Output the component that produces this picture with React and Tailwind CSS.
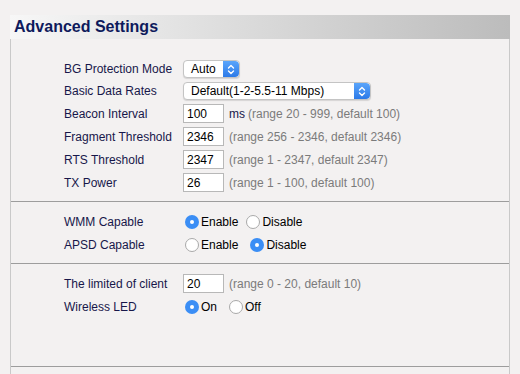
import React from "react";

function Stepper() {
  return (
    <span className="flex h-full w-[16px] items-center justify-center rounded-r-[4px] bg-gradient-to-b from-[#5aa5fb] to-[#2c7ae8]">
      <svg width="8" height="11" viewBox="0 0 8 11" fill="none" stroke="#ffffff" strokeWidth="1.4" strokeLinecap="round" strokeLinejoin="round">
        <path d="M1.5 4 L4 1.5 L6.5 4" />
        <path d="M1.5 7 L4 9.5 L6.5 7" />
      </svg>
    </span>
  );
}

function Select({ value, width, height }) {
  return (
    <span
      className={`flex ${width} ${height} items-stretch overflow-hidden rounded-[4px] border border-[#c4c4c4] bg-white shadow-[0_1px_1px_rgba(0,0,0,0.12)]`}
    >
      <span className="flex flex-1 items-center pl-[7px] text-[12px] text-black">{value}</span>
      <Stepper />
    </span>
  );
}

function TextBox({ value }) {
  return (
    <span className="flex h-[19px] w-[41px] items-center border border-[#b8b8b8] bg-white pl-[3px] text-[12px] text-black">
      {value}
    </span>
  );
}

function Radio({ checked, label, className = "" }) {
  return (
    <span className={`flex items-center ${className}`}>
      {checked ? (
        <span className="flex h-[14px] w-[14px] items-center justify-center rounded-full bg-[#3b8ef5]">
          <span className="h-[4px] w-[4px] rounded-full bg-white" />
        </span>
      ) : (
        <span className="h-[14px] w-[14px] rounded-full border border-[#a9a9a9] bg-white" />
      )}
      <span className="ml-[2px] text-[12px] text-black">{label}</span>
    </span>
  );
}

function Row({ label, h = "h-[23px]", children }) {
  return (
    <div className={`flex ${h} items-center`}>
      <div className="w-[172px] pl-[53px] text-[12px] text-[#17174a]">{label}</div>
      <div className="flex items-center">{children}</div>
    </div>
  );
}

function Hint({ children }) {
  return <span className="ml-[5px] text-[12px] text-[#7b7b7b]">{children}</span>;
}

export default function App() {
  return (
    <div
      className="h-[374px] w-[520px] overflow-hidden bg-[#f3f1f1] pt-[15px] pl-[10px]"
      style={{ fontFamily: '"Liberation Sans", Arial, sans-serif' }}
    >
      <div className="w-[500px]">
        <div className="flex h-[24px] items-center bg-gradient-to-r from-[#f7f7f7] to-[#bcbcbc] pl-[4px] text-[16px] font-bold text-[#0e1a5c]">
          Advanced Settings
        </div>
        <div className="h-[340px] w-[500px] border-x border-[#c9c9c9]">
          <div className="pt-[19px] pb-[7px]">
            <Row label="BG Protection Mode" h="h-[22px]">
              <Select value="Auto" width="w-[57px]" height="h-[18px]" />
            </Row>
            <Row label="Basic Data Rates" h="h-[22px]">
              <Select value="Default(1-2-5.5-11 Mbps)" width="w-[188px]" height="h-[18px]" />
            </Row>
            <Row label="Beacon Interval">
              <TextBox value="100" />
              <span className="ml-[5px] text-[12px] text-[#17174a]">ms</span>
              <span className="ml-[3px] text-[12px] text-[#7b7b7b]">(range 20 - 999, default 100)</span>
            </Row>
            <Row label="Fragment Threshold">
              <TextBox value="2346" />
              <Hint>(range 256 - 2346, default 2346)</Hint>
            </Row>
            <Row label="RTS Threshold">
              <TextBox value="2347" />
              <Hint>(range 1 - 2347, default 2347)</Hint>
            </Row>
            <Row label="TX Power">
              <TextBox value="26" />
              <Hint>(range 1 - 100, default 100)</Hint>
            </Row>
          </div>
          <div className="border-t border-[#9d9d9d] pt-[8px] pb-[7px]">
            <Row label="WMM Capable">
              <Radio checked label="Enable" className="ml-[2px]" />
              <Radio label="Disable" className="ml-[8px]" />
            </Row>
            <Row label="APSD Capable">
              <Radio label="Enable" className="ml-[2px]" />
              <Radio checked label="Disable" className="ml-[12px]" />
            </Row>
          </div>
          <div className="h-[104px] border-t border-b border-[#9d9d9d] pt-[8px]">
            <Row label="The limited of client">
              <TextBox value="20" />
              <Hint>(range 0 - 20, default 10)</Hint>
            </Row>
            <Row label="Wireless LED">
              <Radio checked label="On" className="ml-[2px]" />
              <Radio label="Off" className="ml-[12px]" />
            </Row>
          </div>
        </div>
      </div>
    </div>
  );
}
